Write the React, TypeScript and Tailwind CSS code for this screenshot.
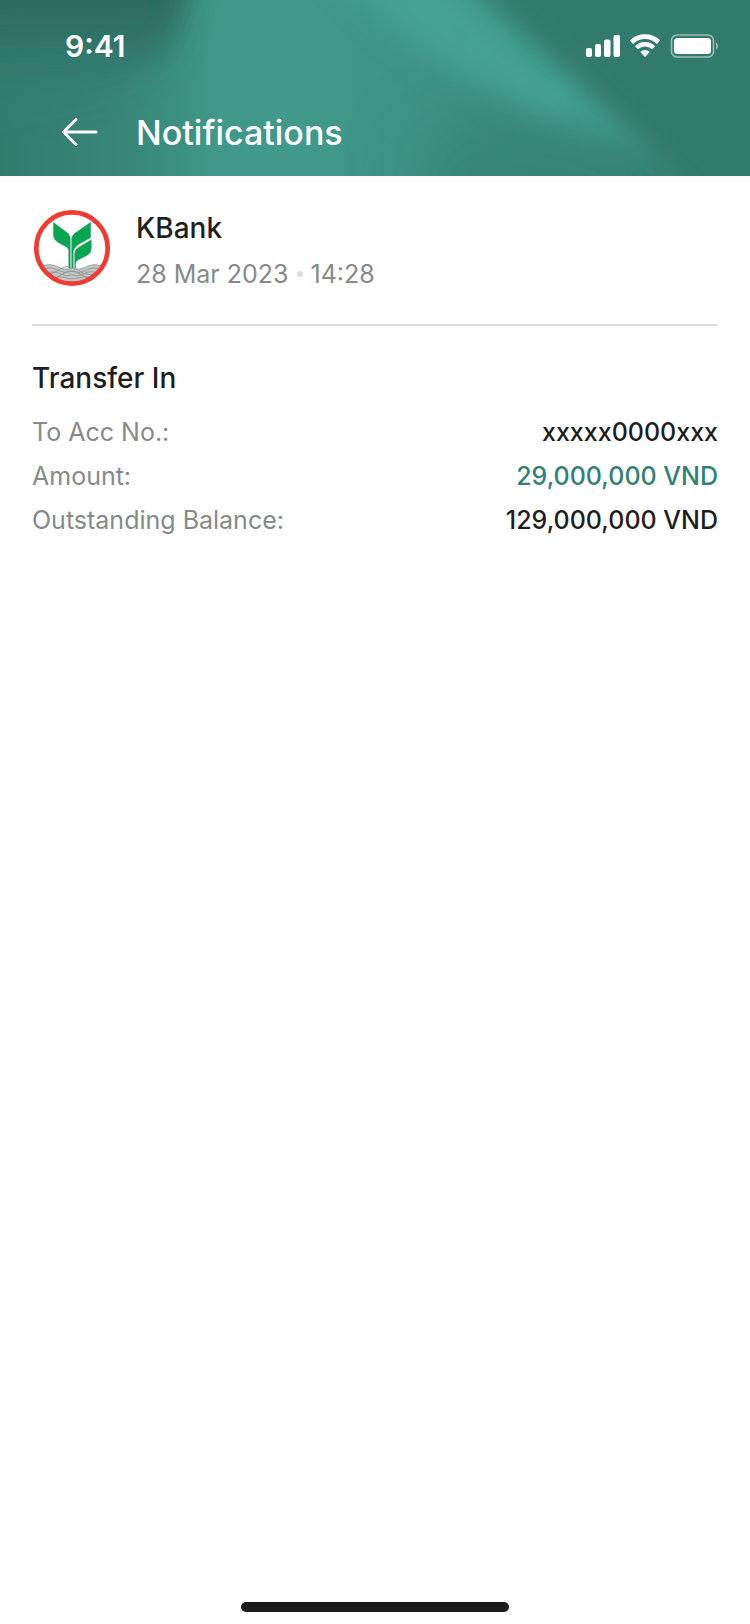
const details = [
  { label: "To Acc No.:", value: "xxxxx0000xxx", color: "text-[#1f1f1f]" },
  { label: "Amount:", value: "29,000,000 VND", color: "text-[#2f8274]" },
  {
    label: "Outstanding Balance:",
    value: "129,000,000 VND",
    color: "text-[#1f1f1f]",
  },
];

const HeaderBackdrop = () => (
  <svg
    className="absolute inset-0 w-full h-full"
    viewBox="0 0 750 176"
    preserveAspectRatio="none"
    aria-hidden="true"
  >
    <defs>
      <linearGradient id="base" x1="0" y1="0" x2="1" y2="0">
        <stop offset="0" stopColor="#327c6e" />
        <stop offset="0.16" stopColor="#378677" />
        <stop offset="0.23" stopColor="#3a8f7e" />
        <stop offset="0.29" stopColor="#409988" />
        <stop offset="0.4" stopColor="#409989" />
        <stop offset="0.55" stopColor="#3d9484" />
        <stop offset="0.75" stopColor="#378778" />
        <stop offset="1" stopColor="#317a6c" />
      </linearGradient>
      <linearGradient id="shade" x1="0" y1="0" x2="0" y2="1">
        <stop offset="0" stopColor="#2b695d" />
        <stop offset="0.4" stopColor="#2d6d61" />
        <stop offset="1" stopColor="#36877a" stopOpacity="0" />
      </linearGradient>
      <linearGradient id="ray" x1="0" y1="0" x2="1" y2="1">
        <stop offset="0" stopColor="#45a191" />
        <stop offset="0.7" stopColor="#44a090" />
        <stop offset="1" stopColor="#3a8c7c" />
      </linearGradient>
      <filter id="soft" x="-50%" y="-50%" width="200%" height="200%">
        <feGaussianBlur stdDeviation="14" />
      </filter>
      <filter id="softer" x="-50%" y="-50%" width="200%" height="200%">
        <feGaussianBlur stdDeviation="34" />
      </filter>
    </defs>
    <rect width="750" height="176" fill="url(#base)" />
    <path
      d="M-60 -60H200Q185 20 165 60Q100 100 -60 140Z"
      fill="url(#shade)"
      filter="url(#soft)"
    />
    <path
      d="M420 150Q500 100 640 150L720 260H440Z"
      fill="#368576"
      filter="url(#softer)"
    />
    <path
      d="M310 -50H430Q540 60 690 160Q540 130 430 60Q380 20 310 -50Z"
      fill="url(#ray)"
      filter="url(#soft)"
    />
    <path
      d="M440 -50H860V240H740Q640 130 440 -50Z"
      fill="#317a6c"
      filter="url(#soft)"
    />
  </svg>
);

const SignalIcon = () => (
  <svg width="34" height="24" viewBox="0 0 34 24" fill="#fff">
    <rect x="0" y="14" width="6" height="9" rx="2" />
    <rect x="9" y="10" width="6" height="13" rx="2" />
    <rect x="18" y="5.5" width="6.5" height="17.5" rx="2" />
    <rect x="27.5" y="1" width="6.5" height="22" rx="2" />
  </svg>
);

const WifiIcon = () => (
  <svg width="30" height="24" viewBox="0 0 30 24" fill="none">
    <path d="M1.4 8.2a19.4 19.4 0 0 1 27.2 0" stroke="#fff" strokeWidth="4.8" />
    <path d="M6.5 13.8a12 12 0 0 1 17 0" stroke="#fff" strokeWidth="4.4" />
    <path d="M10.3 18a6.8 6.8 0 0 1 9.4 0L15 23z" fill="#fff" />
  </svg>
);

const BatteryIcon = () => (
  <svg width="48" height="24" viewBox="0 0 48 24" fill="none">
    <rect
      x="1.5"
      y="1"
      width="42"
      height="22"
      rx="5.5"
      stroke="#fff"
      strokeOpacity="0.5"
      strokeWidth="1.6"
    />
    <rect x="4" y="4" width="37" height="16" rx="3.5" fill="#fff" />
    <path d="M46 8.2v7.6q2-1.4 2-3.8t-2-3.8z" fill="#fff" fillOpacity="0.5" />
  </svg>
);

const KBankLogo = () => (
  <svg
    className="w-20 h-20 shrink-0"
    viewBox="24 24 240 240"
    role="img"
    aria-label="KBank logo"
  >
    <defs>
      <clipPath id="disc">
        <circle cx="144" cy="144" r="101" />
      </clipPath>
    </defs>
    <circle cx="144" cy="144" r="107" fill="#fff" />
    <g clipPath="url(#disc)">
      <path
        d="M40 206C62 190 88 192 104 202Q124 212 144 204Q164 212 184 202C200 192 226 190 248 206V260H40Z"
        fill="#c3c7c5"
      />
      <g fill="none" stroke="#8d9391" strokeWidth="2.5">
        <path d="M40 206C62 190 88 192 104 202Q124 212 144 204Q164 212 184 202C200 192 226 190 248 206" />
        <path d="M40 216C62 200 88 202 104 212Q124 222 144 214Q164 222 184 212C200 202 226 200 248 216" />
        <path d="M50 212Q76 232 104 210T164 212T240 212" />
        <path d="M56 226C78 212 94 214 110 222Q128 232 144 224Q160 232 178 222C196 212 210 212 232 226" />
        <path d="M66 224Q92 242 116 222T172 224T224 224" />
        <path d="M84 238Q104 226 122 233T166 233T206 238" />
      </g>
    </g>
    <path d="M133 150H156V204H133Z" fill="#fff" />
    <g fill="#08a651" stroke="#5f9f8c" strokeWidth="1.5">
      <path d="M88 67L130 98Q139 105 139 118V204H134V150Q132 143 123 139L103 128Q89 120 88 106Z" />
      <path d="M200 67V113L166 132Q151 141 148 154V204H143V118Q143 107 153 99Z" />
      <path d="M202 119V145Q202 160 188 167L162 180Q155 184 155 190V204H152V160Q153 149 164 142Z" />
    </g>
    <circle
      cx="144"
      cy="144"
      r="107"
      fill="none"
      stroke="#ef3b30"
      strokeWidth="14"
    />
  </svg>
);

const StatusBar = () => (
  <div className="flex items-center justify-between h-[88px] pt-1 pl-[65px] pr-8">
    <span className="text-3xl font-semibold">9:41</span>
    <div className="flex items-center gap-[10px]">
      <SignalIcon />
      <WifiIcon />
      <BatteryIcon />
    </div>
  </div>
);

const App = () => {
  return (
    <div className="min-h-screen flex flex-col bg-white text-[#1f1f1f] font-['Inter',sans-serif]">
      <header className="relative overflow-hidden text-white">
        <HeaderBackdrop />
        <div className="relative">
          <StatusBar />
          <div className="flex items-center h-[88px] pt-[2px] pl-[60px]">
            <button type="button" aria-label="Back" className="w-[76px]">
              <svg width="40" height="32" viewBox="0 0 40 32" fill="none">
                <path
                  d="M36 15H4M16 2.5L3.5 15L16 27.5"
                  stroke="#fff"
                  strokeWidth="3"
                  strokeLinecap="round"
                  strokeLinejoin="round"
                />
              </svg>
            </button>
            <h1 className="text-[34px] leading-10 font-medium">
              Notifications
            </h1>
          </div>
        </div>
      </header>

      <main className="flex-1 px-8 pt-8">
        <section className="flex items-start gap-6 pb-[30px] border-b-2 border-[#dfdfdf]">
          <KBankLogo />
          <div className="flex flex-col gap-[6px]">
            <h2 className="text-[28px] leading-10 font-medium">KBank</h2>
            <p className="flex items-center gap-2 text-[25px] leading-10 text-[#868b89]">
              <span>28 Mar 2023</span>
              <span className="w-[6px] h-[6px] rounded-full bg-[#dcdfde]" />
              <span>14:28</span>
            </p>
          </div>
        </section>

        <section className="pt-8">
          <h2 className="text-[28px] leading-10 font-medium">Transfer In</h2>
          <dl className="flex flex-col gap-2 mt-4 text-[25px] leading-9">
            {details.map((item) => (
              <div key={item.label} className="flex justify-between">
                <dt className="text-[#868b89]">{item.label}</dt>
                <dd className={`font-medium ${item.color}`}>{item.value}</dd>
              </div>
            ))}
          </dl>
        </section>
      </main>

      <footer className="flex justify-center pb-3">
        <div className="w-[268px] h-[10px] rounded-full bg-[#1b1b1b]" />
      </footer>
    </div>
  );
};

export default App;
